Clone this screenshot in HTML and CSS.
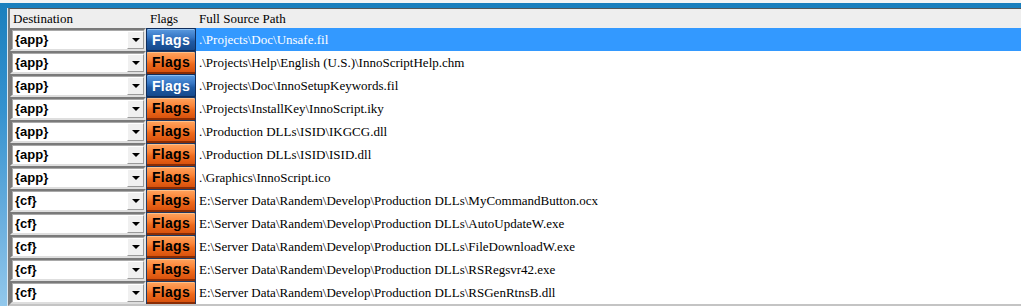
FILE: index.html
```html
<!DOCTYPE html>
<html lang="en">

<head>
  <meta charset="UTF-8" />
  <title>Files</title>
  <link rel="stylesheet" href="styles.css">
</head>

<body>
  <div class="window">
    <div class="list">
      <div class="table">
        <!-- Column headers -->
        <div class="row head">
          <div class="hd hd-dest">Destination</div>
          <div class="hd hd-flags">Flags</div>
          <div class="hd hd-path">Full Source Path</div>
        </div>

        <div class="row selected">
          <div class="combo"><span class="combo-text">{app}</span><span class="drop"><i class="arrow"></i></span></div>
          <div class="flags"><span class="btn blue">Flags</span></div>
          <div class="path">.\Projects\Doc\Unsafe.fil</div>
        </div>
        <div class="row">
          <div class="combo"><span class="combo-text">{app}</span><span class="drop"><i class="arrow"></i></span></div>
          <div class="flags"><span class="btn orange">Flags</span></div>
          <div class="path">.\Projects\Help\English (U.S.)\InnoScriptHelp.chm</div>
        </div>
        <div class="row">
          <div class="combo"><span class="combo-text">{app}</span><span class="drop"><i class="arrow"></i></span></div>
          <div class="flags"><span class="btn blue">Flags</span></div>
          <div class="path">.\Projects\Doc\InnoSetupKeywords.fil</div>
        </div>
        <div class="row">
          <div class="combo"><span class="combo-text">{app}</span><span class="drop"><i class="arrow"></i></span></div>
          <div class="flags"><span class="btn orange">Flags</span></div>
          <div class="path">.\Projects\InstallKey\InnoScript.iky</div>
        </div>
        <div class="row">
          <div class="combo"><span class="combo-text">{app}</span><span class="drop"><i class="arrow"></i></span></div>
          <div class="flags"><span class="btn orange">Flags</span></div>
          <div class="path">.\Production DLLs\ISID\IKGCG.dll</div>
        </div>
        <div class="row">
          <div class="combo"><span class="combo-text">{app}</span><span class="drop"><i class="arrow"></i></span></div>
          <div class="flags"><span class="btn orange">Flags</span></div>
          <div class="path">.\Production DLLs\ISID\ISID.dll</div>
        </div>
        <div class="row">
          <div class="combo"><span class="combo-text">{app}</span><span class="drop"><i class="arrow"></i></span></div>
          <div class="flags"><span class="btn orange">Flags</span></div>
          <div class="path">.\Graphics\InnoScript.ico</div>
        </div>
        <div class="row">
          <div class="combo"><span class="combo-text">{cf}</span><span class="drop"><i class="arrow"></i></span></div>
          <div class="flags"><span class="btn orange">Flags</span></div>
          <div class="path">E:\Server Data\Randem\Develop\Production DLLs\MyCommandButton.ocx</div>
        </div>
        <div class="row">
          <div class="combo"><span class="combo-text">{cf}</span><span class="drop"><i class="arrow"></i></span></div>
          <div class="flags"><span class="btn orange">Flags</span></div>
          <div class="path">E:\Server Data\Randem\Develop\Production DLLs\AutoUpdateW.exe</div>
        </div>
        <div class="row">
          <div class="combo"><span class="combo-text">{cf}</span><span class="drop"><i class="arrow"></i></span></div>
          <div class="flags"><span class="btn orange">Flags</span></div>
          <div class="path">E:\Server Data\Randem\Develop\Production DLLs\FileDownloadW.exe</div>
        </div>
        <div class="row">
          <div class="combo"><span class="combo-text">{cf}</span><span class="drop"><i class="arrow"></i></span></div>
          <div class="flags"><span class="btn orange">Flags</span></div>
          <div class="path">E:\Server Data\Randem\Develop\Production DLLs\RSRegsvr42.exe</div>
        </div>
        <div class="row">
          <div class="combo"><span class="combo-text">{cf}</span><span class="drop"><i class="arrow"></i></span></div>
          <div class="flags"><span class="btn orange">Flags</span></div>
          <div class="path">E:\Server Data\Randem\Develop\Production DLLs\RSGenRtnsB.dll</div>
        </div>
      </div>
    </div>
  </div>
</body>

</html>
```

FILE: styles.css
```css
body {
  margin: 0;
  background-color: #f4f4f4;
  font-family: "Liberation Serif", serif;
  overflow: hidden;
}

.window {
  display: flex;
  margin-top: 3px;
  height: 303px;
  padding: 5px 0 0 7px;
  box-sizing: border-box;
  background: linear-gradient(to bottom, #1a7fbd 0%, #3592cf 35%, #6fb2e0 75%, #92c8ec 100%);
}

.list {
  flex: 1;
  border-left: 1px solid #d9e8f3;
}

.table {
  background-color: #fff;
  border-top: 1px solid #565656;
  border-left: 2px solid #7c7c7c;
  border-bottom: 2px solid #c4c4c4;
}

.row {
  display: grid;
  grid-template-columns: 136px 50px 1fr;
  height: 23px;
}

.head {
  height: 19px;
  background-color: #eeeeee;
  font-size: 13px;
  color: #000;
}

.hd {
  display: flex;
  align-items: center;
}

.hd-dest {
  padding-left: 3px;
}

.hd-flags {
  padding-left: 4px;
}

.hd-path {
  padding-left: 3px;
}

/* combo box */
.combo {
  display: flex;
  align-items: center;
  box-sizing: border-box;
  background-color: #fff;
  border-top: 2px solid #7a7a7a;
  border-left: 2px solid #7a7a7a;
  border-bottom: 2px solid #dedede;
  border-right: 2px solid #e6e6e6;
  box-shadow: inset 1px 1px 0 #a9a9a9;
}

.combo-text {
  flex: 1;
  padding-left: 3px;
  font-family: "Liberation Sans", Arial, sans-serif;
  font-weight: bold;
  font-size: 13px;
  color: #000;
}

.drop {
  width: 17px;
  height: 18px;
  box-sizing: border-box;
  background-color: #f0f0f0;
  border-top: 1px solid #fff;
  border-left: 1px solid #fff;
  border-right: 1px solid #9a9a9a;
  border-bottom: 1px solid #9a9a9a;
  display: flex;
  align-items: center;
  justify-content: center;
}

.arrow {
  width: 0;
  height: 0;
  border-left: 4px solid transparent;
  border-right: 4px solid transparent;
  border-top: 4px solid #000;
}

/* flags buttons */
.flags {
  background-color: #173a6b;
  display: flex;
}

.btn {
  flex: 1;
  display: flex;
  align-items: center;
  justify-content: center;
  border-radius: 2px;
  font-family: "Liberation Sans", Arial, sans-serif;
  font-weight: bold;
  font-size: 14px;
  letter-spacing: 0.3px;
}

.blue {
  color: #fff;
  background: linear-gradient(to bottom, #5b9be0 0%, #3676c4 40%, #1f5aa4 60%, #174a8c 100%);
  border: 1px solid #0f2d5c;
  box-shadow: inset 0 1px 0 #8ec0f2;
}

.orange {
  color: #000;
  background: linear-gradient(to bottom, #ffa45e 0%, #fb8438 40%, #ee6a1c 60%, #d9520d 100%);
  border: 1px solid #1c3a66;
  border-bottom: 2px solid #8a2d05;
  box-shadow: inset 0 1px 0 #ffc08a;
}

.path {
  display: flex;
  align-items: center;
  padding-left: 3px;
  font-size: 13px;
  color: #000;
  white-space: nowrap;
}

.selected .path {
  background-color: #3399ff;
  color: #fff;
}
```
